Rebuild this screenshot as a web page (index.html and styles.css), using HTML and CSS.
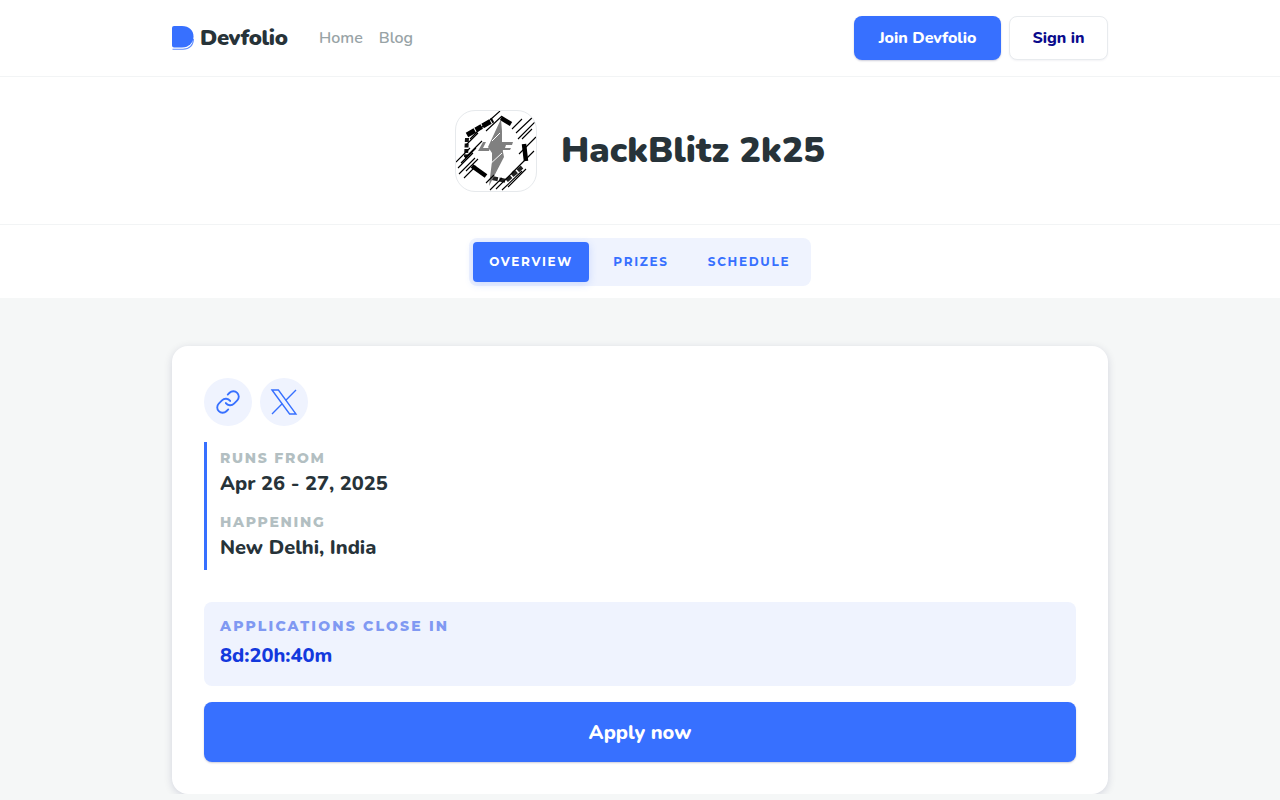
FILE: index.html
```html
<!DOCTYPE html>
<html lang="en">
<head>
    <meta charset="UTF-8">
    <meta name="viewport" content="width=device-width, initial-scale=1.0">
    <title>HackBlitz 2k25</title>
    <link rel="stylesheet" href="styles.css">
</head>
<body>

<header class="topbar">
    <div class="topbar-inner">
        <a class="brand" href="#">
            <svg class="brand-mark" width="22" height="24" viewBox="0 0 22 24">
                <path d="M0.500 23.300 H11 C17.500 23.300 21.400 19 21.400 13" fill="none" stroke="#5c8bff" stroke-width="1.100"/>
                <path d="M0 2 a2 2 0 0 1 2 -2 H10 C17 0 21.500 4.500 21.500 10.500 C21.500 16.500 17 21.500 10 21.500 H2 a2 2 0 0 1 -2 -2 Z" fill="#3770ff"/>
            </svg>
            <span class="brand-name">Devfolio</span>
        </a>
        <nav class="nav">
            <a href="#">Home</a>
            <a href="#">Blog</a>
        </nav>
        <div class="actions">
            <a class="btn btn-primary" href="#">Join Devfolio</a>
            <a class="btn btn-plain" href="#">Sign in</a>
        </div>
    </div>
</header>

<section class="hero">
    <div class="hero-logo">
        <svg width="80" height="80" viewBox="0 0 80 80">
            <path d="M45 7 L55 13" fill="none" stroke="#000" stroke-width="4.500"/>
            <path d="M11 24 L37 9" fill="none" stroke="#000" stroke-width="5" stroke-dasharray="9 1 7 1"/>
            <path d="M68 33 L70 50" fill="none" stroke="#000" stroke-width="4.500"/>
            <path d="M16 55 L30 65" fill="none" stroke="#000" stroke-width="4.500"/>
            <path d="M36 67 L50 70 L66 56" fill="none" stroke="#222" stroke-width="4" stroke-dasharray="6 1.500"/>
            <path d="M11 27 L10 46" fill="none" stroke="#111" stroke-width="4" stroke-dasharray="4 1.500"/>
            <path d="M45 8 L32 36 L36 42 L36 50 L33 75 L48 46 L46 36 L46 20 Z" fill="#808080"/>
            <path d="M27 31 L22 40 H33 L34 37 H27 L30 31 Z M43 31 H57 L56 34 H50 L49 37 H55 L54 39 H47 L45 42 H43 Z" fill="#808080"/>
            <g stroke="#fff" stroke-width="1" fill="none">
                <path d="M36 30 L44 22 M32 55 L46 42"/>
            </g>
            <g stroke="#000" stroke-width="1.100" fill="none">
                <path d="M0 51 L14 37 M2 57 L17 42 M5 52 L20 37 M3 63 L19 47 M9 47 L26 30 M10 60 L22 48 M8 67 L20 55 M10 34 L22 22 M14 28 L28 14 M25 17 L44 0 M30 20 L46 5"/>
                <path d="M56 18 L66 8 M60 22 L79 4 M62 28 L80 10 M66 28 L76 18 M63 43 L79 27 M66 40 L80 26 M60 58 L78 40 M56 62 L72 46"/>
                <path d="M34 79 L46 67 M40 78 L58 60 M46 79 L66 60 M52 76 L70 58 M30 72 L38 64"/>
            </g>
        </svg>
    </div>
    <h1 class="hero-title">HackBlitz 2k25</h1>
</section>

<div class="tabbar">
    <div class="tabs">
        <a class="tab tab-active" href="#">OVERVIEW</a>
        <a class="tab tab-prizes" href="#">PRIZES</a>
        <a class="tab tab-schedule" href="#">SCHEDULE</a>
    </div>
</div>

<main class="content">
    <div class="card">
        <div class="links">
            <a class="link-circle" href="#">
                <svg width="26" height="26" viewBox="0 0 24 24" fill="none" stroke="#3770ff" stroke-width="1.700" stroke-linecap="round" stroke-linejoin="round">
                    <path d="M10 13a5 5 0 0 0 7.540.540l3-3a5 5 0 0 0-7.070-7.070l-1.720 1.710"/>
                    <path d="M14 11a5 5 0 0 0-7.540-.540l-3 3a5 5 0 0 0 7.070 7.070l1.710-1.710"/>
                </svg>
            </a>
            <a class="link-circle" href="#">
                <svg width="36" height="36" viewBox="0 0 24 24" fill="none" stroke="#3770ff" stroke-width="0.900">
                    <path d="M4 4l11.733 16h4.267l-11.733 -16z"/>
                    <path d="M4 20l6.768 -6.768m2.460 -2.460l6.772 -6.772"/>
                </svg>
            </a>
        </div>

        <div class="facts">
            <div class="fact">
                <div class="label">RUNS FROM</div>
                <div class="value">Apr 26 - 27, 2025</div>
            </div>
            <div class="fact">
                <div class="label">HAPPENING</div>
                <div class="value">New Delhi, India</div>
            </div>
        </div>

        <div class="countdown">
            <div class="countdown-label">APPLICATIONS CLOSE IN</div>
            <div class="countdown-time">8d:20h:40m</div>
        </div>

        <a class="apply" href="#">Apply now</a>
    </div>
</main>

</body>
</html>
```

FILE: styles.css
```css
body{
    margin: 0;
    background-color: #f5f7f7;
    font-family: "Nunito", "Noto Sans", "Open Sans", sans-serif;
    color: #273339;
}
a{
    text-decoration: none;
}
.topbar{
    background-color: white;
    border-bottom: 1px solid #f2f4f5;
}
.topbar-inner{
    width: 936px;
    height: 76px;
    margin: 0 auto;
    display: flex;
    align-items: center;
}
.brand{
    display: flex;
    align-items: center;
    gap: 6px;
    color: #273339;
}
.brand-mark{
    display: block;
}
.brand-name{
    font-size: 22px;
    font-weight: 900;
    letter-spacing: -0.350px;
}
.nav{
    display: flex;
    gap: 16px;
    margin-left: 31.500px;
}
.nav a{
    font-size: 16px;
    font-weight: 600;
    color: #98a3a6;
}
.actions{
    display: flex;
    gap: 8px;
    margin-left: auto;
}
.btn{
    height: 44px;
    box-sizing: border-box;
    display: flex;
    align-items: center;
    justify-content: center;
    border-radius: 8px;
    font-size: 16px;
    font-weight: 800;
}
.btn-primary{
    width: 147px;
    background-color: #3770ff;
    color: white;
    box-shadow: 0 1px 2px rgba(3, 0, 71, 0.2);
}
.btn-plain{
    width: 99px;
    background-color: white;
    border: 1px solid #e8ebee;
    color: #0a0a8c;
    box-shadow: 0 1px 2px rgba(3, 0, 71, 0.05);
}
.hero{
    background-color: white;
    border-bottom: 1px solid #f2f4f5;
    height: 147px;
    display: flex;
    align-items: center;
    justify-content: center;
    gap: 24px;
}
.hero-logo{
    width: 80px;
    height: 80px;
    border: 1px solid #e6e9ec;
    border-radius: 20px;
    overflow: hidden;
}
.hero-logo svg{
    display: block;
}
.hero-title{
    margin: 0;
    font-size: 36px;
    font-weight: 900;
    color: #273339;
}
.tabbar{
    background-color: white;
    height: 73px;
    display: flex;
    align-items: center;
    justify-content: center;
}
.tabs{
    display: flex;
    align-items: center;
    width: 342px;
    height: 48px;
    box-sizing: border-box;
    padding: 4px;
    background-color: #eff3fe;
    border-radius: 8px;
}
.tab{
    height: 40px;
    box-sizing: border-box;
    display: flex;
    align-items: center;
    justify-content: center;
    border-radius: 4px;
    font-family: "Montserrat", "Inter", sans-serif;
    font-size: 12px;
    font-weight: 700;
    letter-spacing: 1.700px;
    color: #3770ff;
}
.tab-active{
    width: 116px;
    background-color: #3770ff;
    color: white;
    box-shadow: 0 2px 8px rgba(55, 112, 255, 0.2);
}
.tab-prizes{
    width: 104px;
}
.tab-schedule{
    width: 112px;
}
.content{
    padding: 48px 0 0;
}
.card{
    width: 936px;
    height: 448px;
    box-sizing: border-box;
    margin: 0 auto;
    padding: 32px;
    background-color: white;
    border-radius: 16px;
    box-shadow: 0 2px 8px rgba(3, 0, 71, 0.14);
}
.links{
    display: flex;
    gap: 8px;
}
.link-circle{
    width: 48px;
    height: 48px;
    border-radius: 50%;
    background-color: #eff3fe;
    display: flex;
    align-items: center;
    justify-content: center;
}
.facts{
    margin-top: 16px;
    height: 128px;
    box-sizing: border-box;
    border-left: 3px solid #3770ff;
    padding-left: 13px;
    display: flex;
    flex-direction: column;
    justify-content: center;
    gap: 12px;
}
.label{
    font-family: "Montserrat", "Inter", sans-serif;
    font-size: 14px;
    font-weight: 800;
    letter-spacing: 1.700px;
    color: #b3bfc2;
    line-height: 20px;
}
.value{
    font-size: 20px;
    font-weight: 800;
    line-height: 32px;
    color: #273339;
}
.countdown{
    margin-top: 32px;
    height: 84px;
    box-sizing: border-box;
    padding: 14px 16px;
    background-color: #eff3fe;
    border-radius: 8px;
}
.countdown-label{
    font-family: "Montserrat", "Inter", sans-serif;
    font-size: 14px;
    font-weight: 800;
    letter-spacing: 2.150px;
    line-height: 20px;
    color: #8099f2;
}
.countdown-time{
    margin-top: 4px;
    font-size: 20px;
    font-weight: 800;
    line-height: 32px;
    color: #1339dd;
}
.apply{
    margin-top: 16px;
    height: 60px;
    display: flex;
    align-items: center;
    justify-content: center;
    border-radius: 8px;
    background-color: #3770ff;
    color: white;
    font-size: 20px;
    font-weight: 800;
    box-shadow: 0 1px 2px rgba(3, 0, 71, 0.2);
}
```
